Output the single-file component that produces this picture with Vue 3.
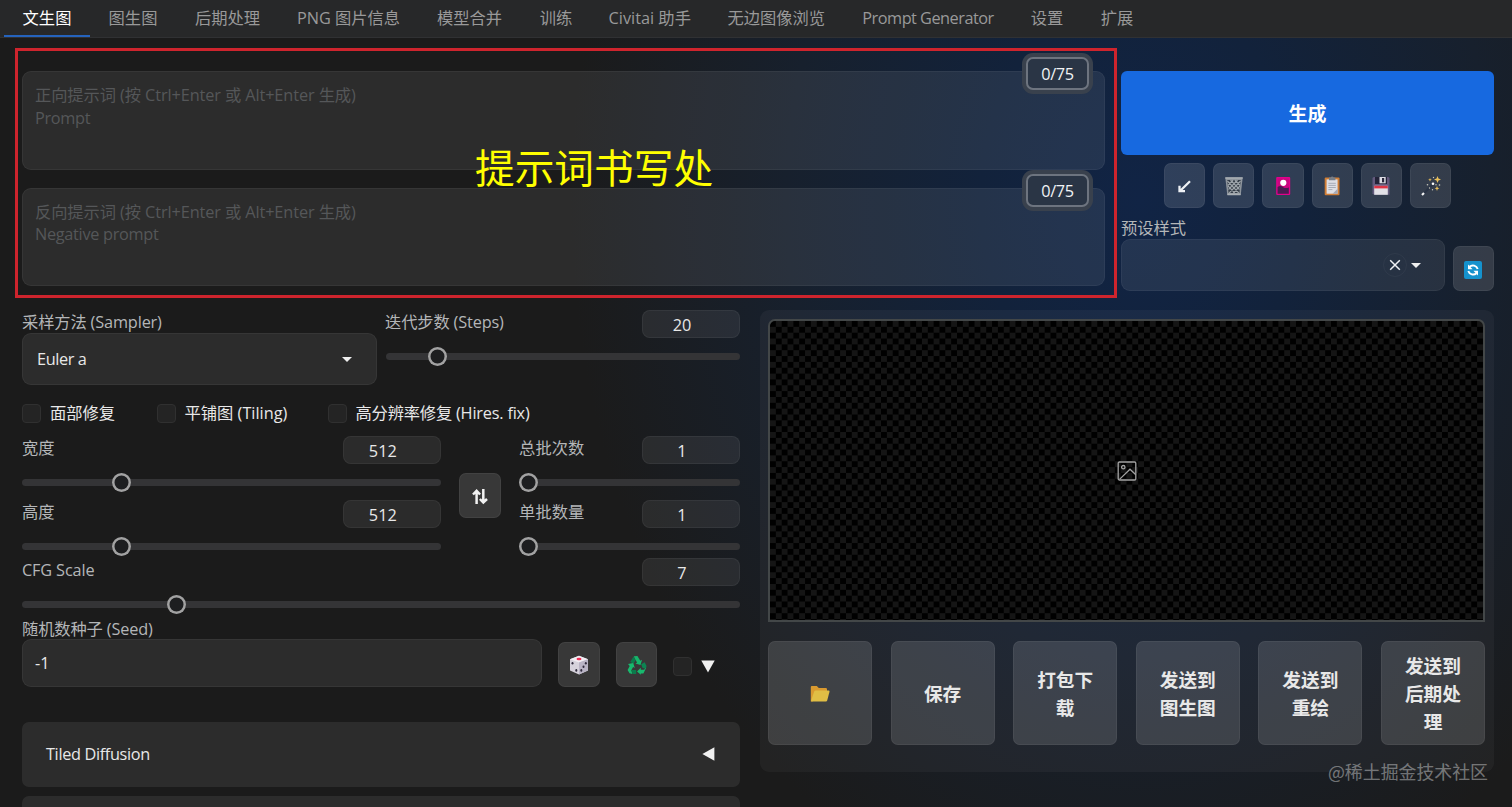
<script setup>

    import { ref } from 'vue';

    const tabs = ['文生图', '图生图', '后期处理', 'PNG 图片信息', '模型合并', '训练', 'Civitai 助手', '无边图像浏览', 'Prompt Generator', '设置', '扩展'];
    const activeTab = ref(0);

    const prompts = [
        { id: 'positive', hint: '正向提示词 (按 Ctrl+Enter 或 Alt+Enter 生成)', name: 'Prompt' },
        { id: 'negative', hint: '反向提示词 (按 Ctrl+Enter 或 Alt+Enter 生成)', name: 'Negative prompt' }
    ];

    const options = ref([
        { id: 'face', label: '面部修复', checked: false },
        { id: 'tiling', label: '平铺图 (Tiling)', checked: false },
        { id: 'hires', label: '高分辨率修复 (Hires. fix)', checked: false }
    ]);

    // thumb is the distance from the left end of the track
    const sizes = [
        { label: '宽度', value: 512, thumb: 90 },
        { label: '高度', value: 512, thumb: 90 }
    ];
    const batches = [
        { label: '总批次数', value: 1, thumb: 0 },
        { label: '单批数量', value: 1, thumb: 0 }
    ];

    const actions = [['保存'], ['打包下', '载'], ['发送到', '图生图'], ['发送到', '重绘'], ['发送到', '后期处', '理']];

</script>

<template>

    <div class="page">

        <nav class="tabs">
            <a
                v-for="(tab, i) in tabs"
                :key="tab"
                class="tab"
                :class="{ active: i === activeTab, latin: tab === 'Prompt Generator' }"
                @click="activeTab = i"
            ><span>{{ tab }}</span></a>
        </nav>

        <section class="top">

            <div class="prompt-frame">
                <div v-for="prompt in prompts" :key="prompt.id" class="prompt-box">
                    <p>{{ prompt.hint }}</p>
                    <p class="latin">{{ prompt.name }}</p>
                    <span class="counter">0/75</span>
                </div>
                <strong class="note">提示词书写处</strong>
            </div>

            <div class="generate-col">
                <button class="generate">生成</button>

                <div class="tools">
                    <button class="tool">
                        <svg width="20" height="20" viewBox="0 0 20 20">
                            <path d="M16 5.2 6.800 14.200M5.500 9.800V15.200h5.500" fill="none" stroke="#eef1f5" stroke-width="2.3" />
                        </svg>
                    </button>
                    <button class="tool">
                        <svg width="20" height="20" viewBox="0 0 20 20">
                            <path d="M1.3 1.5h17.4l-2 17.5H3.3z" fill="#8e959d" />
                            <path d="M3.2 4h13.6l-1.4 13H4.6z" fill="#343d48" />
                            <path d="M3.4 5 14.8 17M6.5 4l9 9.5M10.8 4l5.4 5.5M4 10l6.8 7M16.6 5 5.2 17M13.5 4l-9 9.5M9.2 4 3.8 9.5M16 10l-6.8 7" fill="none" stroke="#9da4aa" stroke-width="1.1" />
                            <path d="M1.3 2h17.4M3.4 18.4h13.2" stroke="#a9afb4" stroke-width="1.6" />
                        </svg>
                    </button>
                    <button class="tool">
                        <svg width="20" height="20" viewBox="0 0 20 20">
                            <rect x="3.2" y="1" width="14" height="18" rx="1" fill="#e3008c" />
                            <path d="M4.600 2.400h11.200v15.400H4.600z" fill="#c9077f" />
                            <path d="M4.6 11q3-2 6 .5 2.500 1 5.200 0v6.300H4.6z" fill="#4b1c52" />
                            <circle cx="10.3" cy="6.8" r="3.1" fill="#fff" />
                        </svg>
                    </button>
                    <button class="tool">
                        <svg width="20" height="20" viewBox="0 0 20 20">
                            <rect x="2.7" y="1.5" width="14.8" height="17.8" rx="1" fill="#d07d35" />
                            <path d="M4.6 3.4h11v14.3h-11z" fill="#dedfe5" />
                            <path d="M15.6 12.8v4.9h-5z" fill="#a5a7b3" />
                            <path d="M7 1.5h1.7a1.6 1.6 0 0 1 3 0h1.7v2.7H7z" fill="#777e88" />
                            <path d="M6.4 7.3h7.4M6.4 9.4h7.4M6.4 11.5h7.4M6.4 13.6h4" stroke="#989eaa" stroke-width=".8" />
                        </svg>
                    </button>
                    <button class="tool">
                        <svg width="20" height="20" viewBox="0 0 20 20">
                            <path d="M1.5 2.5q0-1.500 1.500-1.500h14q1.500 0 1.500 1.500v16.200H2.900l-1.400-1.400z" fill="#635a7d" />
                            <path d="M4 1h12v7H4z" fill="#242338" />
                            <path d="M8.5 1h6.200v6.300H8.500z" fill="#dcdce4" />
                            <path d="M11 2h2.200v4.300H11z" fill="#29283c" />
                            <path d="M3.200 9.800h13.600v9H3.200z" fill="#e2e1e7" />
                            <path d="M3.200 9.800h13.600v2.600H3.200z" fill="#dd3446" />
                        </svg>
                    </button>
                    <button class="tool">
                        <svg width="22" height="22" viewBox="0 0 22 22">
                            <path d="m3 19.200 9-9" stroke="#293345" stroke-width="2.2" />
                            <path d="m2 20 2-2" stroke="#f5f5f5" stroke-width="2.2" />
                            <path d="m17.5 1 1 2.5L21 4.5l-2.5 1-1 2.5-1-2.5-2.5-1 2.5-1zM17 11l.7 1.7 1.7.7-1.7.7L17 16l-.7-1.900-1.700-.7 1.700-.7zM10 3l.5 1.200 1.300.6-1.300.5L10 6.600l-.5-1.300-1.300-.5 1.300-.6z" fill="#e9bf5a" />
                            <g fill="#c9c9bd">
                                <circle cx="13" cy="8.8" r="1.3" fill="#fff" />
                                <circle cx="7.5" cy="9.7" r=".8" />
                                <circle cx="9.5" cy="13" r=".7" />
                                <circle cx="12.5" cy="14.8" r=".7" />
                                <circle cx="19.5" cy="10" r=".8" />
                                <circle cx="13.5" cy="2.5" r=".7" />
                                <circle cx="16" cy="9.8" r=".7" />
                            </g>
                        </svg>
                    </button>
                </div>

                <label class="label style-label">预设样式</label>
                <div class="style-row">
                    <div class="style-select">
                        <span class="clear">
                            <svg width="12" height="12" viewBox="0 0 12 12">
                                <path d="m1.200 1.200 9.600 9.600m0-9.600-9.600 9.600" stroke="#f0f2f5" stroke-width="1.5" />
                            </svg>
                        </span>
                        <i class="caret"></i>
                    </div>
                    <button class="tool refresh">
                        <svg width="20" height="20" viewBox="0 0 20 20">
                            <rect x="1" y="1" width="18" height="18" rx="2" fill="#1592cd" />
                            <path d="M6.500 6.800a5 5 0 0 1 8.200 2.200M13.500 13.200a5 5 0 0 1-8.200-2.200" fill="none" stroke="#fff" stroke-width="1.900" />
                            <path d="M5 4.600v4.600h4.600zM15 15.400v-4.600h-4.600z" fill="#fff" />
                        </svg>
                    </button>
                </div>
            </div>

        </section>

        <section class="main">

            <div class="settings">

                <div class="sampler-row">
                    <div class="sampler">
                        <label class="label mixed">采样方法 (Sampler)</label>
                        <div class="select">Euler a <i class="caret"></i></div>
                    </div>
                    <div class="slider">
                        <div class="slider-head">
                            <label class="label mixed steps">迭代步数 (Steps)</label>
                            <span class="number">20</span>
                        </div>
                        <div class="track"><i class="thumb" :style="{ marginLeft: '42px' }"></i></div>
                    </div>
                </div>

                <div class="options">
                    <label v-for="option in options" :key="option.id" class="option" :class="option.id" @click="option.checked = !option.checked">
                        <i class="check"></i>{{ option.label }}
                    </label>
                </div>

                <div class="size-row">
                    <div class="slider-group sizes">
                        <div v-for="item in sizes" :key="item.label" class="slider">
                            <div class="slider-head">
                                <label class="label">{{ item.label }}</label>
                                <span class="number">{{ item.value }}</span>
                            </div>
                            <div class="track"><i class="thumb" :style="{ marginLeft: item.thumb + 'px' }"></i></div>
                        </div>
                    </div>
                    <button class="tool swap">
                        <svg width="18" height="18" viewBox="0 0 18 18">
                            <path d="M5.600 17V4M2 7.500l3.600-3.700 3.500 3.700M12.300 2v13M8.900 12l3.400 3.500 3.700-3.500" fill="none" stroke="#f2f2f2" stroke-width="2.5" />
                        </svg>
                    </button>
                    <div class="slider-group batches">
                        <div v-for="item in batches" :key="item.label" class="slider">
                            <div class="slider-head">
                                <label class="label">{{ item.label }}</label>
                                <span class="number">{{ item.value }}</span>
                            </div>
                            <div class="track"><i class="thumb" :style="{ marginLeft: item.thumb + 'px' }"></i></div>
                        </div>
                    </div>
                </div>

                <div class="slider cfg">
                    <div class="slider-head">
                        <label class="label mixed">CFG Scale</label>
                        <span class="number">7</span>
                    </div>
                    <div class="track"><i class="thumb" :style="{ marginLeft: '144.500px' }"></i></div>
                </div>

                <div class="seed-row">
                    <div class="seed">
                        <label class="label mixed">随机数种子 (Seed)</label>
                        <div class="seed-input">-1</div>
                    </div>
                    <button class="tool">
                        <svg width="20" height="20" viewBox="0 0 20 20">
                            <path d="m10 .8 9 3.400v11.200l-9 4-9-4V4.200z" fill="#d6d2dc" />
                            <path d="m10 .8 9 3.400-9 3.300-9-3.300z" fill="#f0edf3" />
                            <path d="m10 7.500 9-3.300v11.200l-9 4z" fill="#b9b4c5" />
                            <ellipse cx="10" cy="4" rx="2.5" ry="1.3" fill="#ee3158" />
                            <g fill="#302b3d">
                                <ellipse cx="3.5" cy="8.3" rx="1" ry="1.3" />
                                <ellipse cx="7.3" cy="15.4" rx="1" ry="1.3" />
                                <ellipse cx="16.8" cy="8.3" rx="1" ry="1.3" />
                                <ellipse cx="14.5" cy="11.8" rx="1" ry="1.3" />
                                <ellipse cx="12.3" cy="15.4" rx="1" ry="1.3" />
                            </g>
                        </svg>
                    </button>
                    <button class="tool recycle">
                        <svg width="20" height="20" viewBox="0 0 20 20">
                            <path d="m6.800 1.300 3.600-.2 2.900 4.600 1.700-.9-1.500 5.200-5.100-1.400 1.700-1-2-3.400z" fill="#16b56b" />
                            <path d="m6.500 1.600 2 3.600-2 3.600-3.300-1.900z" fill="#0b7b4c" />
                            <path d="m1 9 5.200-.9L7.800 13l-1.700-.9-1.800 3.100 1 3.700-2.800-.6L.6 15l2.100-4z" fill="#18b96e" />
                            <path d="M4.600 15.100h4.600v3.800H5.500z" fill="#0b7b4c" />
                            <path d="m14.200 9.200 3.400-1.900 1.900 3.600-.7 3.100-3.300-1.200z" fill="#0c8552" />
                            <path d="m19.300 12.500-2.900 6h-2.600v1.300L10 16.600l3.800-3.800v1.900h3.300z" fill="#18b96e" />
                        </svg>
                    </button>
                    <i class="check"></i>
                    <svg class="down" width="14" height="13" viewBox="0 0 14 13"><path d="M.3.6h13.400L7 12.400z" fill="#f0f0f0" /></svg>
                </div>

                <div class="accordion">
                    <span>Tiled Diffusion</span>
                    <svg width="13" height="14" viewBox="0 0 13 14"><path d="M12.400.3v13.400L.4 7z" fill="#f0f0f0" /></svg>
                </div>
                <div class="accordion next"></div>

            </div>

            <div class="output">

                <div class="gallery">
                    <svg width="22" height="22" viewBox="0 0 22 22" fill="none" stroke="#a2a2a2" stroke-width="1.3">
                        <rect x="2.2" y="2" width="17.6" height="18" rx="1.2" />
                        <circle cx="7.3" cy="7.2" r="1.7" />
                        <path d="M3.500 19.400 14 9.200l5.800 5.500" />
                    </svg>
                </div>

                <div class="actions">
                    <button class="action">
                        <svg width="20" height="18" viewBox="0 0 20 18">
                            <path d="M.8 2q0-1 1-1h5l2 2h7q1.200 0 1.200 1.200V10L2 16.500H.8z" fill="#d99a30" />
                            <path d="M5.600 5.600h13q1.200 0 .9 1.200l-2.300 8.700q-.3 1-1.300 1H1.800q-.9 0-.7-1L4.200 6.600q.4-1 1.400-1z" fill="#e0be45" />
                        </svg>
                    </button>
                    <button v-for="(lines, i) in actions" :key="i" class="action">
                        <span v-for="line in lines" :key="line">{{ line }}</span>
                    </button>
                </div>

            </div>

        </section>

        <span class="watermark">@稀土掘金技术社区</span>

    </div>

</template>

<style>
    body{
        margin: 0;
        background-color: #1b1b1b;
        overflow: hidden;
    }
</style>

<style scoped>
    *{
        box-sizing: border-box;
    }

    .page{
        position: relative;
        width: 1512px;
        height: 807px;
        overflow: hidden;
        background: radial-gradient(ellipse 570px 740px at 1140px 200px, #112445 0%, #12223b 28%, #17202d 62%, #1b1b1b 100%) #1b1b1b;
        color: #e8e8e8;
        font-family: "Open Sans", "Noto Sans CJK SC", sans-serif;
        font-size: 16.3px;
        line-height: 22px;
    }

    button{
        font: inherit;
        color: inherit;
        padding: 0;
        cursor: pointer;
    }

    p{
        margin: 0;
    }

    .tabs{
        display: grid;
        grid-template-columns: 86px 86px 103px 139px 103px 70px 117.5px 135.5px 168px 70px 70px;
        height: 38px;
        padding-left: 4px;
        background-color: #272829;
        border-bottom: 1px solid #303133;
    }

    .tab{
        display: flex;
        justify-content: center;
        height: 37px;
        padding-top: 7px;
        color: #999;
        white-space: nowrap;
        cursor: pointer;
    }

    .latin{
        letter-spacing: -.3px;
    }

    .tab.latin{
        letter-spacing: -.5px;
    }

    .tab.active{
        color: #fff;
        border-bottom: 2px solid #2563bd;
    }

    .top{
        display: flex;
        padding: 10px 0 0 15px;
        height: 260px;
    }

    .prompt-frame{
        position: relative;
        display: flex;
        flex-direction: column;
        gap: 18px;
        width: 1102px;
        height: 250px;
        padding: 20px 9px 0 4px;
        border: 3px solid #ce242d;
    }

    .prompt-box{
        position: relative;
        height: 98.500px;
        padding: 12px 12px;
        border: 1px solid rgba(255, 255, 255, .05);
        border-radius: 9px;
        background-color: rgba(255, 255, 255, .08);
        color: #555759;
        line-height: 22.500px;
        letter-spacing: -.1px;
    }

    .counter{
        position: absolute;
        right: 15px;
        top: -15px;
        width: 63px;
        height: 33px;
        border: 2px solid #6d747f;
        border-radius: 7px;
        background-color: #2a3545;
        box-shadow: 0 0 0 4px #39414d;
        color: #f1f3f5;
        line-height: 30px;
        text-align: center;
        letter-spacing: -.3px;
    }

    .note{
        position: absolute;
        left: 457px;
        top: 86px;
        color: #ff0;
        font-family: "Noto Sans CJK SC", sans-serif;
        font-size: 39.700px;
        font-weight: 400;
        line-height: 58px;
        white-space: nowrap;
    }

    .generate-col{
        width: 373px;
        margin-left: 4px;
        padding-top: 23px;
    }

    .generate{
        display: block;
        width: 373px;
        height: 84px;
        padding-top: 2px;
        border: 0;
        border-radius: 6px;
        background-color: #1769e0;
        color: #fff;
        font-size: 19px;
        font-weight: 700;
    }

    .tools{
        display: flex;
        justify-content: center;
        gap: 8px;
        padding-top: 8px;
    }

    .tool{
        display: flex;
        align-items: center;
        justify-content: center;
        flex: none;
        width: 41.300px;
        height: 45px;
        border: 1px solid rgba(255, 255, 255, .05);
        border-radius: 7px;
        background-color: rgba(255, 255, 255, .13);
    }

    .refresh{
        padding-top: 2px;
    }

    .label{
        display: block;
        color: #b4b6b8;
        white-space: nowrap;
    }

    .mixed{
        letter-spacing: -.15px;
    }

    .style-label{
        margin-top: 9px;
        height: 22px;
    }

    .style-row{
        display: flex;
        align-items: flex-end;
        justify-content: space-between;
    }

    .style-select{
        display: flex;
        align-items: center;
        justify-content: flex-end;
        gap: 4px;
        width: 324px;
        height: 52px;
        padding-right: 23px;
        border: 1px solid rgba(255, 255, 255, .05);
        border-radius: 9px;
        background-color: rgba(255, 255, 255, .08);
    }

    .clear{
        display: flex;
        align-items: center;
        justify-content: center;
        width: 24px;
        height: 24px;
        border: 1px solid rgba(255, 255, 255, .04);
        border-radius: 50%;
    }

    .caret{
        width: 0;
        height: 0;
        border: 5px solid transparent;
        border-top: 5px solid #f0f0f0;
        border-bottom: 0;
    }

    .main{
        display: flex;
        gap: 20px;
        padding: 12px 0 0 22px;
    }

    .settings{
        width: 718px;
    }

    .sampler-row{
        display: flex;
        gap: 9px;
        height: 75px;
    }

    .sampler{
        width: 355px;
    }

    .sampler .label{
        height: 23px;
        padding-top: 1px;
    }

    .select{
        display: flex;
        align-items: center;
        justify-content: space-between;
        height: 52px;
        padding: 0 24px 0 14px;
        border: 1px solid rgba(255, 255, 255, .05);
        border-radius: 9px;
        background-color: rgba(255, 255, 255, .08);
        letter-spacing: -.4px;
    }

    .slider{
        flex: 1;
        height: 57px;
    }

    .slider-head{
        display: flex;
        justify-content: space-between;
        height: 28px;
    }

    .slider-head .label{
        padding-top: 1px;
    }

    .slider-head .steps{
        margin-left: -1px;
    }

    .number{
        width: 98px;
        height: 28px;
        padding-right: 18px;
        border: 1px solid rgba(255, 255, 255, .05);
        border-radius: 8px;
        background-color: rgba(255, 255, 255, .07);
        line-height: 28px;
        text-align: center;
    }

    .track{
        display: flex;
        align-items: center;
        height: 7px;
        margin-top: 15px;
        border-radius: 4px;
        background-color: #343436;
    }

    .thumb{
        width: 19px;
        height: 19px;
        border-radius: 50%;
        background-color: #1d1e20;
        box-shadow: inset 0 0 0 2.500px #a2a2a2;
    }

    .options{
        display: flex;
        height: 51px;
        padding-top: 17px;
    }

    .option{
        display: flex;
        align-items: center;
        gap: 9px;
        height: 22px;
        white-space: nowrap;
    }

    .option.face{
        width: 134.500px;
    }

    .option.tiling{
        width: 171px;
    }

    .option.hires{
        letter-spacing: -.2px;
    }

    .check{
        flex: none;
        width: 19px;
        height: 19px;
        border: 1px solid #303030;
        border-radius: 4px;
        background-color: #242424;
    }

    .size-row{
        display: flex;
        height: 122px;
    }

    .slider-group{
        display: flex;
        flex-direction: column;
        gap: 7px;
    }

    .slider-group .slider{
        flex: none;
    }

    .sizes{
        width: 419px;
    }

    .swap{
        margin: 37px 18.500px 0;
    }

    .batches{
        width: 221px;
    }

    .seed-row{
        display: flex;
        height: 72px;
        padding-top: 2px;
    }

    .seed-row .tool{
        margin: 25px 16.300px 0;
    }

    .seed-row .recycle{
        margin-left: 0;
        margin-right: 15.500px;
    }

    .seed-row .check{
        margin-top: 40px;
    }

    .seed{
        width: 520px;
    }

    .seed .label{
        height: 22px;
        padding-top: 1px;
    }

    .seed-input{
        height: 48px;
        padding-left: 12px;
        border: 1px solid rgba(255, 255, 255, .05);
        border-radius: 9px;
        background-color: rgba(255, 255, 255, .08);
        line-height: 47px;
    }

    .down{
        margin: 43px 0 0 9px;
    }

    .accordion{
        display: flex;
        align-items: center;
        justify-content: space-between;
        height: 64.500px;
        margin-top: 35px;
        padding: 0 25px 0 24px;
        border-radius: 7px;
        background-color: rgba(255, 255, 255, .08);
        letter-spacing: -.35px;
    }

    .accordion.next{
        margin-top: 9px;
    }

    .output{
        width: 734px;
        height: 462px;
        padding: 9px 9px 0 8px;
        border-radius: 9px;
        background-color: rgba(255, 255, 255, .04);
    }

    .gallery{
        display: flex;
        align-items: center;
        justify-content: center;
        height: 303px;
        border: 2px solid #434748;
        border-radius: 7px 7px 0 0;
        background: repeating-conic-gradient(#151515 0 25%, #000 0 50%) 0 0 / 11.700px 11.700px;
    }

    .actions{
        display: flex;
        justify-content: space-between;
        padding-top: 18.500px;
    }

    .action{
        display: flex;
        flex-direction: column;
        align-items: center;
        justify-content: center;
        width: 104px;
        height: 104.500px;
        padding-top: 3px;
        border: 1px solid rgba(255, 255, 255, .05);
        border-radius: 7px;
        background-color: rgba(255, 255, 255, .13);
        font-size: 18.700px;
        font-weight: 700;
        line-height: 28px;
    }

    .watermark{
        position: absolute;
        right: 24px;
        bottom: 24px;
        color: rgba(255, 255, 255, .4);
        font-family: "Noto Sans CJK SC", sans-serif;
        font-size: 17.900px;
        line-height: 24px;
        white-space: nowrap;
    }
</style>
